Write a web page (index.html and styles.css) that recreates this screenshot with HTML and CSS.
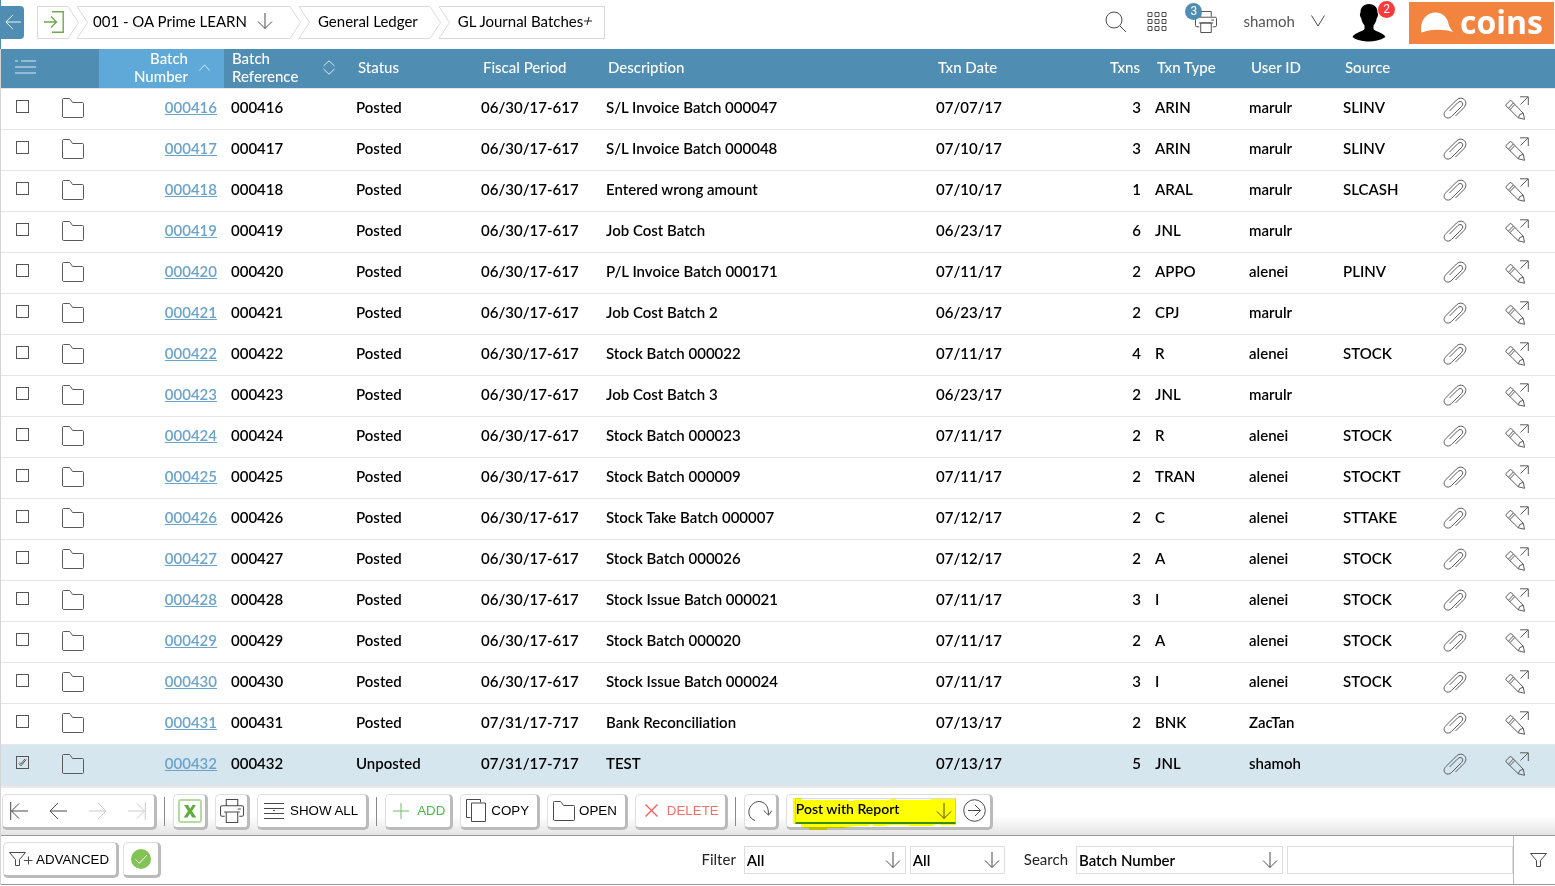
FILE: index.html
```html
<!DOCTYPE html>
<html lang="en">
<head>
<meta charset="utf-8">
<title>GL Journal Batches</title>
<link rel="stylesheet" href="styles.css">
</head>
<body>
<svg class="sprite" aria-hidden="true">
  <symbol id="folder" viewBox="0 0 22 20"><path d="M.5 18V1.5Q.5.5 1.5.5H7Q8 .5 8.500 1.500L10.500 4.500H20.500Q21.500 4.500 21.500 5.500V18.500Q21.500 19.500 20.500 19.500H1.500Q.5 19.500.5 18Z"/></symbol>
  <symbol id="clip" viewBox="0 0 24 22"><path d="M12.500 19L21 10.500C24 7 23 3.500 20.500 2C18.500.5 15.500 1 13.500 3L3 13.500C.5 16 .8 18.500 2.200 20C4 21.600 6.500 21.500 8.500 19.500L18.500 9.500C20.300 7.500 19.800 6 19 5.200C18 4.200 16.200 4.300 14.800 5.700L6.500 14"/></symbol>
  <symbol id="pencil" viewBox="0 0 24 24"><path d="M1 8.500L5 4.700Q5.800 4.200 6.500 4.900L18.300 17.300L19.500 23.300L13.300 21.800L1 9.800Q.4 9.100 1 8.500ZM3.500 12.200L8.300 7M5 13.700L9.800 8.500M13.300 21.800L14.800 18.500L18.300 17.300M15 .8H23.300V9M23 1L15.500 8.500"/></symbol>
  <symbol id="down" viewBox="0 0 16 16"><path d="M8 0V15.500M1 8.500L8 15.500L15 8.500"/></symbol>
  <symbol id="left" viewBox="0 0 18 18"><path d="M18 9H1M9 1L1 9L9 17"/></symbol>
  <symbol id="right" viewBox="0 0 18 18"><path d="M0 9H17M9 1L17 9L9 17"/></symbol>
  <symbol id="funnel" viewBox="0 0 17 14"><path d="M.5.5H16.500L10.500 7.500V13.500H6.500V7.500Z"/></symbol>
  <symbol id="printer" viewBox="0 0 23 23"><path d="M6 6V.5H17V6M4.500 16.500H2Q.5 16.500.5 15V8Q.5 6.500 2 6.500H21Q22.500 6.500 22.500 8V15Q22.500 16.500 21 16.500H18.500M6 12.500H17V22.500H6ZM4 12.500H19M17 9.500H20"/></symbol>
  <symbol id="crumb-sep" viewBox="0 0 20 33"><path d="M0 .5L10.500 16.500L0 32.500M20 .5H9L19.500 16.500L9 32.500H20"/></symbol>
</svg>

<header class="topbar">
  <button class="back" type="button" aria-label="Back"><svg class="icon i16"><use href="#left"/></svg></button>
  <nav class="crumbs" aria-label="Breadcrumb">
    <a class="crumb crumb-home" href="#" aria-label="Enter"><svg class="icon i22 green" viewBox="0 0 22 22"><path d="M8 .8H19.200V21.200H8M0 11H12.500M7 5.500L12.500 11L7 16.500"/></svg></a>
    <svg class="crumb-sep"><use href="#crumb-sep"/></svg>
    <a class="crumb crumb-company" href="#">001 - OA Prime LEARN <svg class="icon i16"><use href="#down"/></svg></a>
    <svg class="crumb-sep"><use href="#crumb-sep"/></svg>
    <a class="crumb" href="#">General Ledger</a>
    <svg class="crumb-sep"><use href="#crumb-sep"/></svg>
    <a class="crumb crumb-last" href="#">GL Journal Batches<svg class="plus" viewBox="0 0 8 8"><path d="M0 4H8M5 0L3 8"/></svg></a>
  </nav>
  <div class="tools">
    <button class="tool" type="button" aria-label="Search"><svg class="icon i22" viewBox="0 0 22 22"><circle cx="9" cy="9" r="8"/><path d="M15 15L21 21"/></svg></button>
    <button class="tool" type="button" aria-label="Applications"><svg class="icon i20" viewBox="0 0 20 20"><path d="M1 1.500h4v4h-4zM8 1.500h4v4h-4zM15 1.500h4v4h-4zM1 8.500h4v4h-4zM8 8.500h4v4h-4zM15 8.500h4v4h-4zM1 15.500h4v4h-4zM8 15.500h4v4h-4zM15 15.500h4v4h-4z"/></svg></button>
    <button class="tool tool-print" type="button" aria-label="Print queue"><svg class="icon i22"><use href="#printer"/></svg><span class="badge badge-blue">3</span></button>
    <button class="user" type="button">shamoh <svg class="icon chevron" viewBox="0 0 14 12"><path d="M.5.5L7 11L13.500.5"/></svg></button>
    <button class="avatar" type="button" aria-label="Profile"><svg class="person" viewBox="0 0 34 38"><path d="M17 0C22.500 0 25.800 3.500 25.500 9C26.600 9.500 26 13 24.800 14C24.400 17 23 19.500 21.500 21.500V25C22 27.500 31 28 33.500 33C28 36.500 22 37.500 17 37.500C12 37.500 5 36.500.5 33C3 28 12 27.500 12.500 25V21.500C11 19.500 9.600 17 9.200 14C8 13 7.400 9.500 8.500 9C8.200 3.500 11.500 0 17 0Z"/></svg><span class="badge badge-red">2</span></button>
    <a class="logo" href="#"><svg class="hat" viewBox="0 0 36 21"><path d="M1 19C.5 8 7 0 16.500 0C25 0 29 6 30.500 13C31.500 16 33 18 35 20.500C29 18.500 22 17.800 14 18.500C9 18.800 5 20 2 21Q1 20.500 1 19Z"/></svg><span>coins</span></a>
  </div>
</header>

<main class="content">
<table class="grid">
  <colgroup><col class="c-check"><col class="c-folder"><col class="c-wide"><col class="c-wide"><col class="c-wide"><col class="c-wide"><col><col class="c-wide"><col class="c-mid"><col class="c-mid"><col class="c-mid"><col class="c-mid"><col class="c-clip"><col class="c-edit"></colgroup>
  <thead>
    <tr>
      <th class="check" colspan="2"><button class="menu" type="button" aria-label="Columns"><svg class="icon" viewBox="0 0 22 14" width="22" height="14"><path d="M0 1H3M6 1H21M0 7H21M0 13H21"/></svg></button></th>
      <th class="sorted"><div class="sort sort-end"><span>Batch<br>Number</span><svg class="icon" viewBox="0 0 11 7" width="11" height="7"><path d="M.5 6.500L5.500.8L10.500 6.500"/></svg></div></th>
      <th class="ref"><div class="sort"><span>Batch<br>Reference</span><svg class="icon" viewBox="0 0 12 15" width="12" height="15"><path d="M.5 6L6 .8L11.500 6M.5 9L6 14.200L11.500 9"/></svg></div></th>
      <th>Status</th><th>Fiscal Period</th><th>Description</th><th>Txn Date</th><th class="num">Txns</th><th>Txn Type</th><th>User ID</th><th>Source</th><th></th><th></th>
    </tr>
  </thead>
  <tbody>
    <tr><td class="check"><input type="checkbox" aria-label="Select 000416"></td><td class="pic"><svg class="icon folder"><use href="#folder"/></svg></td><td class="num"><a href="#">000416</a></td><td>000416</td><td>Posted</td><td>06/30/17-617</td><td>S/L Invoice Batch 000047</td><td>07/07/17</td><td class="num">3</td><td>ARIN</td><td>marulr</td><td>SLINV</td><td class="act"><svg class="icon clip"><use href="#clip"/></svg></td><td class="act"><svg class="icon pencil"><use href="#pencil"/></svg></td></tr>
    <tr><td class="check"><input type="checkbox" aria-label="Select 000417"></td><td class="pic"><svg class="icon folder"><use href="#folder"/></svg></td><td class="num"><a href="#">000417</a></td><td>000417</td><td>Posted</td><td>06/30/17-617</td><td>S/L Invoice Batch 000048</td><td>07/10/17</td><td class="num">3</td><td>ARIN</td><td>marulr</td><td>SLINV</td><td class="act"><svg class="icon clip"><use href="#clip"/></svg></td><td class="act"><svg class="icon pencil"><use href="#pencil"/></svg></td></tr>
    <tr><td class="check"><input type="checkbox" aria-label="Select 000418"></td><td class="pic"><svg class="icon folder"><use href="#folder"/></svg></td><td class="num"><a href="#">000418</a></td><td>000418</td><td>Posted</td><td>06/30/17-617</td><td>Entered wrong amount</td><td>07/10/17</td><td class="num">1</td><td>ARAL</td><td>marulr</td><td>SLCASH</td><td class="act"><svg class="icon clip"><use href="#clip"/></svg></td><td class="act"><svg class="icon pencil"><use href="#pencil"/></svg></td></tr>
    <tr><td class="check"><input type="checkbox" aria-label="Select 000419"></td><td class="pic"><svg class="icon folder"><use href="#folder"/></svg></td><td class="num"><a href="#">000419</a></td><td>000419</td><td>Posted</td><td>06/30/17-617</td><td>Job Cost Batch</td><td>06/23/17</td><td class="num">6</td><td>JNL</td><td>marulr</td><td></td><td class="act"><svg class="icon clip"><use href="#clip"/></svg></td><td class="act"><svg class="icon pencil"><use href="#pencil"/></svg></td></tr>
    <tr><td class="check"><input type="checkbox" aria-label="Select 000420"></td><td class="pic"><svg class="icon folder"><use href="#folder"/></svg></td><td class="num"><a href="#">000420</a></td><td>000420</td><td>Posted</td><td>06/30/17-617</td><td>P/L Invoice Batch 000171</td><td>07/11/17</td><td class="num">2</td><td>APPO</td><td>alenei</td><td>PLINV</td><td class="act"><svg class="icon clip"><use href="#clip"/></svg></td><td class="act"><svg class="icon pencil"><use href="#pencil"/></svg></td></tr>
    <tr><td class="check"><input type="checkbox" aria-label="Select 000421"></td><td class="pic"><svg class="icon folder"><use href="#folder"/></svg></td><td class="num"><a href="#">000421</a></td><td>000421</td><td>Posted</td><td>06/30/17-617</td><td>Job Cost Batch 2</td><td>06/23/17</td><td class="num">2</td><td>CPJ</td><td>marulr</td><td></td><td class="act"><svg class="icon clip"><use href="#clip"/></svg></td><td class="act"><svg class="icon pencil"><use href="#pencil"/></svg></td></tr>
    <tr><td class="check"><input type="checkbox" aria-label="Select 000422"></td><td class="pic"><svg class="icon folder"><use href="#folder"/></svg></td><td class="num"><a href="#">000422</a></td><td>000422</td><td>Posted</td><td>06/30/17-617</td><td>Stock Batch 000022</td><td>07/11/17</td><td class="num">4</td><td>R</td><td>alenei</td><td>STOCK</td><td class="act"><svg class="icon clip"><use href="#clip"/></svg></td><td class="act"><svg class="icon pencil"><use href="#pencil"/></svg></td></tr>
    <tr><td class="check"><input type="checkbox" aria-label="Select 000423"></td><td class="pic"><svg class="icon folder"><use href="#folder"/></svg></td><td class="num"><a href="#">000423</a></td><td>000423</td><td>Posted</td><td>06/30/17-617</td><td>Job Cost Batch 3</td><td>06/23/17</td><td class="num">2</td><td>JNL</td><td>marulr</td><td></td><td class="act"><svg class="icon clip"><use href="#clip"/></svg></td><td class="act"><svg class="icon pencil"><use href="#pencil"/></svg></td></tr>
    <tr><td class="check"><input type="checkbox" aria-label="Select 000424"></td><td class="pic"><svg class="icon folder"><use href="#folder"/></svg></td><td class="num"><a href="#">000424</a></td><td>000424</td><td>Posted</td><td>06/30/17-617</td><td>Stock Batch 000023</td><td>07/11/17</td><td class="num">2</td><td>R</td><td>alenei</td><td>STOCK</td><td class="act"><svg class="icon clip"><use href="#clip"/></svg></td><td class="act"><svg class="icon pencil"><use href="#pencil"/></svg></td></tr>
    <tr><td class="check"><input type="checkbox" aria-label="Select 000425"></td><td class="pic"><svg class="icon folder"><use href="#folder"/></svg></td><td class="num"><a href="#">000425</a></td><td>000425</td><td>Posted</td><td>06/30/17-617</td><td>Stock Batch 000009</td><td>07/11/17</td><td class="num">2</td><td>TRAN</td><td>alenei</td><td>STOCKT</td><td class="act"><svg class="icon clip"><use href="#clip"/></svg></td><td class="act"><svg class="icon pencil"><use href="#pencil"/></svg></td></tr>
    <tr><td class="check"><input type="checkbox" aria-label="Select 000426"></td><td class="pic"><svg class="icon folder"><use href="#folder"/></svg></td><td class="num"><a href="#">000426</a></td><td>000426</td><td>Posted</td><td>06/30/17-617</td><td>Stock Take Batch 000007</td><td>07/12/17</td><td class="num">2</td><td>C</td><td>alenei</td><td>STTAKE</td><td class="act"><svg class="icon clip"><use href="#clip"/></svg></td><td class="act"><svg class="icon pencil"><use href="#pencil"/></svg></td></tr>
    <tr><td class="check"><input type="checkbox" aria-label="Select 000427"></td><td class="pic"><svg class="icon folder"><use href="#folder"/></svg></td><td class="num"><a href="#">000427</a></td><td>000427</td><td>Posted</td><td>06/30/17-617</td><td>Stock Batch 000026</td><td>07/12/17</td><td class="num">2</td><td>A</td><td>alenei</td><td>STOCK</td><td class="act"><svg class="icon clip"><use href="#clip"/></svg></td><td class="act"><svg class="icon pencil"><use href="#pencil"/></svg></td></tr>
    <tr><td class="check"><input type="checkbox" aria-label="Select 000428"></td><td class="pic"><svg class="icon folder"><use href="#folder"/></svg></td><td class="num"><a href="#">000428</a></td><td>000428</td><td>Posted</td><td>06/30/17-617</td><td>Stock Issue Batch 000021</td><td>07/11/17</td><td class="num">3</td><td>I</td><td>alenei</td><td>STOCK</td><td class="act"><svg class="icon clip"><use href="#clip"/></svg></td><td class="act"><svg class="icon pencil"><use href="#pencil"/></svg></td></tr>
    <tr><td class="check"><input type="checkbox" aria-label="Select 000429"></td><td class="pic"><svg class="icon folder"><use href="#folder"/></svg></td><td class="num"><a href="#">000429</a></td><td>000429</td><td>Posted</td><td>06/30/17-617</td><td>Stock Batch 000020</td><td>07/11/17</td><td class="num">2</td><td>A</td><td>alenei</td><td>STOCK</td><td class="act"><svg class="icon clip"><use href="#clip"/></svg></td><td class="act"><svg class="icon pencil"><use href="#pencil"/></svg></td></tr>
    <tr><td class="check"><input type="checkbox" aria-label="Select 000430"></td><td class="pic"><svg class="icon folder"><use href="#folder"/></svg></td><td class="num"><a href="#">000430</a></td><td>000430</td><td>Posted</td><td>06/30/17-617</td><td>Stock Issue Batch 000024</td><td>07/11/17</td><td class="num">3</td><td>I</td><td>alenei</td><td>STOCK</td><td class="act"><svg class="icon clip"><use href="#clip"/></svg></td><td class="act"><svg class="icon pencil"><use href="#pencil"/></svg></td></tr>
    <tr><td class="check"><input type="checkbox" aria-label="Select 000431"></td><td class="pic"><svg class="icon folder"><use href="#folder"/></svg></td><td class="num"><a href="#">000431</a></td><td>000431</td><td>Posted</td><td>07/31/17-717</td><td>Bank Reconciliation</td><td>07/13/17</td><td class="num">2</td><td>BNK</td><td>ZacTan</td><td></td><td class="act"><svg class="icon clip"><use href="#clip"/></svg></td><td class="act"><svg class="icon pencil"><use href="#pencil"/></svg></td></tr>
    <tr class="selected"><td class="check"><span class="ticked"><input type="checkbox" checked aria-label="Select 000432"><svg class="tick" viewBox="0 0 9 9"><path d="M.8 5.500L3 7.800L8.200 1.500M1.800 4.500L3 5.800L7 1"/></svg></span></td><td class="pic"><svg class="icon folder"><use href="#folder"/></svg></td><td class="num"><a href="#">000432</a></td><td>000432</td><td>Unposted</td><td>07/31/17-717</td><td>TEST</td><td>07/13/17</td><td class="num">5</td><td>JNL</td><td>shamoh</td><td></td><td class="act"><svg class="icon clip"><use href="#clip"/></svg></td><td class="act"><svg class="icon pencil"><use href="#pencil"/></svg></td></tr>
  </tbody>
</table>

<div class="toolbar">
  <div class="btn pager">
    <button type="button" aria-label="First page"><svg class="icon i18" viewBox="0 0 18 18"><path d="M.7 0V18M18 9H1.500M9 1.500L1.500 9L9 16.500"/></svg></button>
    <button type="button" aria-label="Previous page"><svg class="icon i18"><use href="#left"/></svg></button>
    <button type="button" aria-label="Next page" disabled><svg class="icon i18"><use href="#right"/></svg></button>
    <button type="button" aria-label="Last page" disabled><svg class="icon i18" viewBox="0 0 18 18"><path d="M17.300 0V18M0 9H16.500M9 1.500L16.500 9L9 16.500"/></svg></button>
  </div>
  <span class="divider"></span>
  <button class="btn square" type="button" aria-label="Export to Excel"><svg class="icon excel" viewBox="0 0 24 24"><rect x="1" y="1" width="22" height="22" rx="2"/><path d="M6 6H10L12.200 9.700L14.500 6H18L14 12L18.300 18.500H14.300L12 14.500L9.500 18.500H5.700L10 12Z"/></svg></button>
  <button class="btn square" type="button" aria-label="Print"><svg class="icon i24"><use href="#printer"/></svg></button>
  <button class="btn showall" type="button"><svg class="icon" viewBox="0 0 20 16" width="20" height="16"><path d="M0 .5H20M0 5.500H20M0 10.500H20M0 15.500H20M9 7.500H11"/></svg>SHOW ALL</button>
  <span class="divider"></span>
  <button class="btn add" type="button"><svg class="icon i16" viewBox="0 0 16 16"><path d="M8 0V16M0 8H16"/></svg>ADD</button>
  <button class="btn" type="button"><svg class="icon copy" viewBox="0 0 20 23"><path d="M4.500 18.500H.5V.5H14.500V3.500M5.500 4H19.500V22.500H5.500Z"/></svg>COPY</button>
  <button class="btn open" type="button"><svg class="icon folder"><use href="#folder"/></svg>OPEN</button>
  <button class="btn delete" type="button"><svg class="icon" viewBox="0 0 13 13" width="13" height="13"><path d="M.5.5L12.500 12.500M12.500.5L.5 12.500"/></svg>DELETE</button>
  <span class="divider"></span>
  <button class="btn square" type="button" aria-label="Refresh"><svg class="icon i24" viewBox="0 0 24 22"><path d="M7 20.500C1 18.500-.5 12 2 7.500C4.500 2.500 10 0 15 2.500C18.500 4 20.500 8 20.500 14.500M15.800 10.500L20.500 15.200L24 10.500"/></svg></button>
  <div class="btn action">
    <div class="select select-action">
      <select aria-label="Action"><option>Post with Report</option></select>
      <svg class="icon arrow"><use href="#down"/></svg>
      <svg class="marker" viewBox="0 0 165 34"><path d="M1 0H9V2H55L58 3H61V2H96L99 1H104V2H137L140 1H164V27H148L145 26L140 28H118L115 27H96L93 28H82L79 26L76 28H63L50 30H35V32H17V30L9 29V26H1Z"/></svg>
    </div>
    <button class="go" type="button" aria-label="Run action"><svg class="icon" viewBox="0 0 23 23" width="23" height="23"><circle cx="11.500" cy="11.500" r="10.800"/><path d="M5 11.500H17.500M12 6L17.500 11.500L12 17"/></svg></button>
  </div>
</div>

<div class="filterbar">
  <button class="btn advanced" type="button"><svg class="icon" viewBox="0 0 24 14" width="24" height="14"><path d="M.5.5H16.500L10.500 7.500V13.500H6.500V7.500ZM15 8.500H23.500M19.500 4.500V12.500"/></svg>ADVANCED</button>
  <button class="btn apply" type="button" aria-label="Apply"><svg class="ok" viewBox="0 0 20 20"><circle cx="10" cy="10" r="10"/><path d="M4.500 10.500L8.300 14.300L16 6"/></svg></button>
  <form class="filters">
    <label for="filter">Filter</label>
    <div class="select select-filter"><select id="filter"><option>All</option></select><svg class="icon arrow"><use href="#down"/></svg></div>
    <div class="select select-small"><select aria-label="Second filter"><option>All</option></select><svg class="icon arrow"><use href="#down"/></svg></div>
    <label class="search-label" for="search-by">Search</label>
    <div class="select select-search"><select id="search-by"><option>Batch Number</option></select><svg class="icon arrow"><use href="#down"/></svg></div>
    <input class="query" type="text" aria-label="Search text">
  </form>
  <button class="funnel" type="button" aria-label="Filter"><svg class="icon" width="17" height="14"><use href="#funnel"/></svg></button>
</div>
</main>
</body>
</html>
```
FILE: styles.css
```css
* { box-sizing: border-box; }

body {
  margin: 0;
  background: #fff;
  color: #000;
  font-family: Lato, "Liberation Sans", sans-serif;
  font-size: 15px;
  line-height: 18px;
  font-variant-ligatures: none;
}

button { font-family: inherit; color: inherit; background: none; border: 0; padding: 0; }
a { color: inherit; text-decoration: none; }
svg { display: block; flex: none; }

.sprite { position: absolute; width: 0; height: 0; }
.icon { fill: none; stroke: #4a4a4a; stroke-width: 1; }
.i16 { width: 16px; height: 16px; }
.i18 { width: 18px; height: 18px; }
.i20 { width: 20px; height: 20px; }
.i22 { width: 22px; height: 22px; }
.i24 { width: 24px; height: 24px; }

/* Top bar */
.topbar { display: flex; align-items: flex-start; height: 49px; border-left: 1px solid #4f8db3; }
.back {
  display: flex; align-items: center; justify-content: center;
  width: 23px; height: 33px; margin-top: 6px; padding-bottom: 2px;
  background: #4f8db3; border-radius: 0 4px 4px 0;
}
.back .icon { stroke: #fff; }
.crumbs { display: flex; height: 33px; margin: 6px 0 0 13px; }
.crumb {
  display: flex; align-items: center; padding: 0 12px 3px 8px;
  border: solid #d9d9d9; border-width: 1px 0; white-space: nowrap;
}
.crumb-home { border-left-width: 1px; padding: 0 2px 1px 6px; }
.crumb-company { gap: 10px; padding: 0 17px 3px 5px; }
.crumb-last { border-right-width: 1px; padding-right: 12px; gap: 1px; }
.crumb-sep { width: 20px; height: 33px; fill: none; stroke: #d9d9d9; }
.green { stroke: #70a84e; stroke-width: 1.4; }
.plus { width: 8px; height: 8px; stroke: #222; fill: none; }

.tools { display: flex; align-items: flex-start; margin-left: auto; }
.tool { position: relative; margin: 11px 20px 0 0; }
.tool-print { margin-left: 8px; margin-right: 26px; }
.badge {
  position: absolute; width: 17px; height: 17px; border-radius: 50%;
  color: #fff; font: 12px/17px Roboto, sans-serif; text-align: center;
}
.badge-blue { background: #4f8db3; left: -10px; top: -8px; }
.badge-red { background: #fb3b3b; right: -9px; top: -3px; }
.user { display: flex; align-items: center; gap: 16px; margin-top: 12px; font-size: 15px; line-height: 18px; color: #555; }
.chevron { width: 14px; height: 12px; }
.avatar { position: relative; margin: 4px 23px 0 27px; }
.person { width: 34px; height: 38px; }
.logo {
  display: flex; align-items: center; justify-content: center; gap: 6px;
  width: 145px; height: 42px; margin: 2px 1px 0 0; padding-bottom: 2px; background: #f38440; color: #fff;
  font: bold 32px/40px "Open Sans", sans-serif;
}
.hat { width: 34px; height: 21px; fill: #fff; }

/* Batch table */
.content { border-left: 1px solid #d4d4d4; }
.grid { width: 100%; table-layout: fixed; border-spacing: 0; }
.c-check { width: 49px; }
.c-folder { width: 49px; }
.c-wide { width: 125px; }
.c-mid { width: 94px; }
.c-clip { width: 62px; }
.c-edit { width: 63px; }

th {
  height: 40px; padding: 0 8px 3px 9px; background: #4f8db3; color: #fff;
  border-bottom: 1px solid #e6e6e6;
  font-weight: 500; text-align: left; white-space: nowrap;
}
th.check { padding-left: 14px; }
th.sorted { background: #5fa9d8; }
th.ref { padding-left: 8px; }
th.num { text-align: right; }
.menu { display: block; }
th .icon { stroke: #d9e9f3; }
.sort { display: flex; align-items: center; justify-content: space-between; padding-right: 6px; }
.sort-end { justify-content: flex-end; gap: 11px; text-align: right; }

td { height: 41px; padding: 0 7px 4px; border-bottom: 1px solid #e6e6e6; font-weight: 600; white-space: nowrap; }
td.num { text-align: right; }
td.num a { color: #6ba3cb; text-decoration: underline; }
td.check { padding: 0 0 6px 15px; }
td.pic { padding: 0 0 2px 12px; }
td.act { padding: 0 0 2px 13px; }
td .icon { stroke: #5a5a5a; }
.selected td { background: #d6e6ee; border-bottom-color: #e0e4e6; }
.folder { width: 22px; height: 20px; }
.clip { width: 24px; height: 22px; }
.pencil { width: 24px; height: 24px; }
input[type="checkbox"] {
  display: block; appearance: none; width: 13px; height: 13px; margin: 0;
  border: 1px solid #555; background: #fff;
}
.ticked { display: block; position: relative; width: 13px; }
.ticked input[type="checkbox"] { background: transparent; }
.tick { position: absolute; left: 2px; top: 2px; width: 9px; height: 9px; fill: none; stroke: #555; }

/* Toolbar */
.toolbar {
  display: flex; align-items: center; gap: 7px; height: 50px; padding-left: 1px;
  border-top: 2px solid #e8e8e8; border-bottom: 1px solid #999;
  background: linear-gradient(#fff 60%, #e4e4e4);
}
.btn {
  display: flex; align-items: center; justify-content: center; gap: 5px;
  height: 36px; padding: 0 8px 0 5px; background: #fff;
  border: 1px solid #dedede; border-right: 3px solid #bbb; border-bottom: 3px solid #bbb; border-radius: 5px;
  font-family: "Liberation Sans", Arial, sans-serif; white-space: nowrap;
}
.square { width: 35px; padding: 0; }
.pager { width: 155px; padding: 0 8px 0 7px; justify-content: space-between; }
.pager button:disabled .icon { stroke: #ccc; }
.divider { width: 2px; height: 29px; border-left: 1px solid #888; }
.excel { width: 24px; height: 24px; stroke: #b5dca0; stroke-width: 2; }
.excel path { fill: #5fae3c; stroke: none; }
.showall { padding: 0 8px 0 6px; gap: 6px; }
.add { color: #4db848; gap: 8px; padding: 0 5px 0 7px; }
.add .icon { stroke: #6cc067; }
.copy { width: 20px; height: 23px; }
.open { gap: 4px; }
.delete { color: #f0716a; gap: 9px; padding: 0 6px 0 9px; }
.delete .icon { stroke: #f0605a; stroke-width: 1.4; }
.action { gap: 7px; padding: 0 4px 0 8px; }

.select { position: relative; }
.select select {
  display: block; width: 100%; height: 28px; padding: 0 24px 0 2px; margin: 0;
  appearance: none; background: #fff; border: 1px solid #ddd; border-radius: 0;
  color: #000; font: 600 15px/18px Lato, sans-serif;
}
.arrow { position: absolute; right: 5px; top: 6px; width: 16px; height: 16px; pointer-events: none; }
.select-action { width: 161px; }
.select-action select { height: 26px; padding: 0 24px 2px 0; border-bottom: 2px solid #3c8c1a; font-size: 14px; }
.select-action .arrow { top: 5px; right: 4px; }
.marker { position: absolute; left: -3px; top: 0; width: 165px; height: 34px; fill: #ff0; mix-blend-mode: multiply; pointer-events: none; }

/* Filter bar */
.filterbar {
  display: flex; align-items: center; gap: 4px; height: 49px; padding-left: 2px;
  border-bottom: 1px solid #999;
}
.advanced { gap: 3px; padding: 0 7px 0 5px; }
.apply { width: 38px; padding: 0; }
.ok { width: 20px; height: 20px; fill: #83c254; }
.ok path { fill: none; stroke: #fff; }
.filters { display: flex; align-items: center; gap: 4px; margin-left: auto; }
.filters label { margin-right: 4px; padding-bottom: 2px; color: #222; }
.filters .search-label { margin-left: 15px; }
.select-filter { width: 162px; }
.select-small { width: 95px; }
.select-search { width: 207px; }
.query { width: 226px; height: 28px; border: 1px solid #ddd; padding: 0 4px; font: 15px/18px Lato, sans-serif; }
.funnel { display: flex; align-items: center; align-self: stretch; padding: 0 8px 0 16px; margin-left: -4px; border-left: 1px solid #bbb; }
```
